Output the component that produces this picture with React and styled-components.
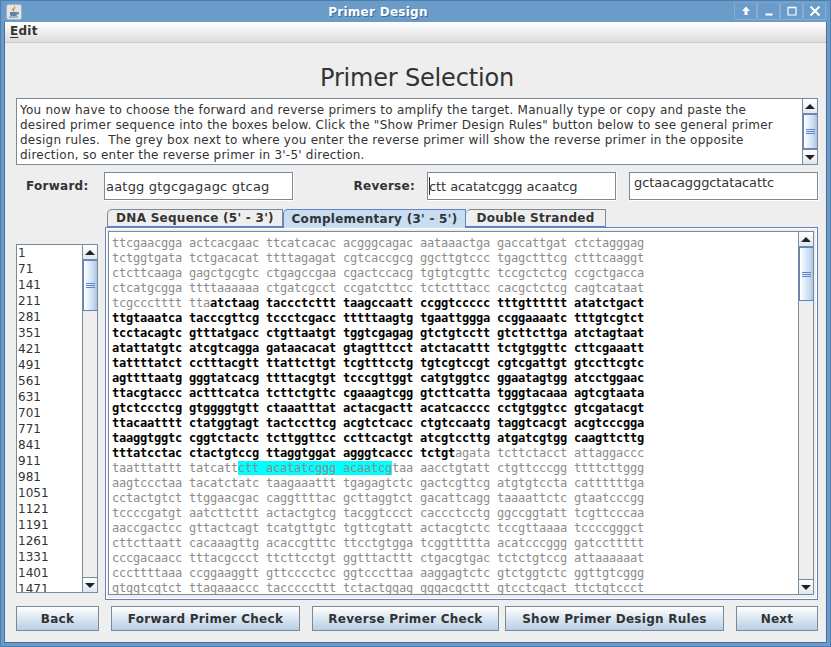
import React from 'react';
import styled, { createGlobalStyle } from 'styled-components';

const sans = '"DejaVu Sans", sans-serif';
const mono = '"DejaVu Sans Mono", monospace';
const steel = '#7a8a99';
const ocean = '#6382bf';

const GlobalStyle = createGlobalStyle`
  html, body {
    margin: 0;
    padding: 0;
    background: #eeeeee;
  }
`;

const Frame = styled.div`
  box-sizing: border-box;
  width: 831px;
  height: 647px;
  display: flex;
  flex-direction: column;
  background: #6a9bc9;
  border: 1px solid #4f7fae;
  font-family: ${sans};
  color: #333333;
  overflow: hidden;
`;

const TitleBar = styled.div`
  height: 21px;
  flex: none;
  display: flex;
  align-items: center;
  padding: 0 4px 0 5px;
`;

const AppIcon = styled.svg`
  width: 16px;
  height: 16px;
  display: block;
  flex: none;
`;

const TitleText = styled.div`
  flex: 1;
  text-align: center;
  font-size: 12px;
  font-weight: 700;
  letter-spacing: 0.27px;
  color: #ffffff;
  text-shadow: 1px 1px 0 #3f6a94;
`;

const WindowButtons = styled.div`
  flex: none;
  display: flex;
`;

const WindowButton = styled.div`
  box-sizing: border-box;
  width: 23px;
  height: 18px;
  margin-top: -2px;
  display: flex;
  align-items: center;
  justify-content: center;
  border: 1px solid #86aed4;
  border-top-color: #7aa5ce;
  border-radius: 2px;
  background: #6a9bc9;

  svg {
    display: block;
  }
`;

const Client = styled.div`
  flex: 1;
  margin: 0 3px 3px 3px;
  display: flex;
  flex-direction: column;
  background: #eeeeee;
  border: solid #45709b;
  border-width: 0 1px 1px 1px;
  min-height: 0;
`;

const MenuBar = styled.div`
  height: 21px;
  flex: none;
  box-sizing: border-box;
  display: flex;
  align-items: center;
  padding: 0 0 2px 5px;
  background: linear-gradient(#ffffff, #dcdcdc);
  border-bottom: 1px solid #cccccc;
  font-size: 12px;
  font-weight: 700;
  letter-spacing: 0.27px;

  u {
    text-underline-offset: 2px;
  }
`;

const Body = styled.div`
  flex: 1;
  display: flex;
  flex-direction: column;
  padding: 0 8px 0 11px;
`;

const Heading = styled.h1`
  margin: 0;
  height: 55px;
  padding-top: 21px;
  box-sizing: border-box;
  text-align: center;
  font-size: 24px;
  line-height: 29px;
  letter-spacing: -0.18px;
  font-weight: 400;
  color: #333333;
`;

const ScrollBox = styled.div`
  box-sizing: border-box;
  display: flex;
  background: #ffffff;
  border: 1px solid ${steel};
  overflow: hidden;
`;

const Intro = styled(ScrollBox)`
  height: 67px;
`;

const IntroText = styled.div`
  flex: 1;
  padding: 4px 3px 0 3px;
  font-size: 12px;
  line-height: 15px;
  letter-spacing: 0.24px;
  white-space: pre;
  overflow: hidden;
`;

const Track = styled.div`
  flex: none;
  width: 15px;
  box-sizing: border-box;
  display: flex;
  flex-direction: column;
  background: #eeeeee;
  border-left: 1px solid ${steel};
`;

const Arrow = styled.div`
  flex: none;
  height: 15px;
  box-sizing: border-box;
  display: flex;
  align-items: center;
  justify-content: center;
  background: linear-gradient(#ffffff, #dde8f3);
  border-bottom: ${p => (p.$down ? 'none' : `1px solid ${steel}`)};
  border-top: ${p => (p.$down ? `1px solid ${steel}` : 'none')};

  &::after {
    content: '';
    width: 0;
    height: 0;
    border-left: 5px solid transparent;
    border-right: 5px solid transparent;
    ${p => (p.$down ? 'border-top: 5px solid #222222;' : 'border-bottom: 5px solid #222222;')}
  }
`;

const Thumb = styled.div`
  flex: none;
  height: ${p => p.$size}px;
  box-sizing: border-box;
  display: flex;
  flex-direction: column;
  align-items: center;
  justify-content: center;
  gap: 1px;
  background: linear-gradient(90deg, #ffffff, #c8ddf2 70%, #a9c3e0);
  border: 1px solid ${ocean};
  border-width: 1px 0 1px 1px;

  i {
    display: block;
    width: 9px;
    height: 1px;
    background: ${ocean};
  }
`;

const Gutter = styled.div`
  flex: 1;
`;

const Scrollbar = ({ size }) => (
  <Track>
    <Arrow />
    <Thumb $size={size}>
      <i />
      <i />
      <i />
    </Thumb>
    <Gutter />
    <Arrow $down />
  </Track>
);

const PrimerRow = styled.div`
  height: 28px;
  margin-top: 7px;
  display: grid;
  grid-template-columns: 88px 189px 134px 189px 189px;
  align-items: center;
`;

const FieldLabel = styled.div`
  font-size: 12px;
  font-weight: 700;
  letter-spacing: 0.27px;
  text-align: ${p => (p.$right ? 'right' : 'left')};
  padding-left: ${p => (p.$right ? '0' : '10px')};
  padding-right: ${p => (p.$right ? '12px' : '0')};
`;

const Field = styled.div`
  box-sizing: border-box;
  height: 28px;
  margin-left: ${p => (p.$gap ? '13px' : '0')};
  width: 189px;
  padding: ${p => (p.$raised ? '2px 1px 0 4px' : '0 1px')};
  display: flex;
  align-items: ${p => (p.$raised ? 'flex-start' : 'center')};
  background: #ffffff;
  border: 1px solid ${steel};
  box-shadow: 1px 1px 0 #ffffff;
  font-size: 13px;
  letter-spacing: ${p => p.$track}px;
  white-space: pre;
`;

const Caret = styled.span`
  display: inline-block;
  width: 1px;
  height: 18px;
  margin-right: -1px;
  background: #333333;
`;

const Workspace = styled.div`
  margin-top: 9px;
  display: grid;
  grid-template-columns: 82px 1fr;
  column-gap: 7px;
  height: 391px;
`;

const NumberBox = styled(ScrollBox)`
  margin-top: 35px;
  height: 349px;
`;

const NumberList = styled.div`
  flex: 1;
  padding-left: 1px;
  font-size: 12px;
  line-height: 16px;
  overflow: hidden;
`;

const TabPane = styled.div`
  display: flex;
  flex-direction: column;
  min-width: 0;
`;

const TabStrip = styled.div`
  height: 18px;
  flex: none;
  display: flex;
  padding-left: 2px;
  position: relative;
  z-index: 1;
`;

const Tab = styled.div`
  box-sizing: border-box;
  width: ${p => p.$width}px;
  height: ${p => (p.$active ? 19 : 18)}px;
  display: flex;
  align-items: center;
  justify-content: center;
  font-size: 12px;
  font-weight: 700;
  letter-spacing: 0.27px;
  color: #333333;
  background: ${p => (p.$active ? '#c8ddf2' : '#eeeeee')};
  border: 1px solid ${p => (p.$active ? ocean : steel)};
  border-bottom: ${p => (p.$active ? 'none' : `1px solid ${ocean}`)};
  border-left-width: ${p => (p.$first || p.$active ? 1 : 0)}px;
  border-top-left-radius: 5px;
`;

const TabPanel = styled.div`
  box-sizing: border-box;
  height: 373px;
  padding: 3px 3px 4px 2px;
  border: 1px solid ${ocean};
  box-shadow: inset 0 0 0 1px #ffffff;
  display: flex;
`;

const SequenceBox = styled(ScrollBox)`
  flex: 1;
  min-width: 0;
`;

const Sequence = styled.pre`
  flex: 1;
  margin: 0;
  padding: 4px 0 0 3px;
  font-family: ${mono};
  font-size: 12px;
  line-height: 15px;
  letter-spacing: -0.224px;
  color: #8c8c8c;
  overflow: hidden;
`;

const Strong = styled.b`
  color: #000000;
  font-weight: 700;
`;

const Hit = styled.span`
  background: #00ffff;
`;

const ButtonRow = styled.div`
  margin-top: 6px;
  display: flex;
`;

const ActionButton = styled.button`
  box-sizing: border-box;
  width: ${p => p.$width}px;
  height: 25px;
  margin: 0 ${p => p.$after ?? 0}px 0 0;
  padding: 0;
  font-family: ${sans};
  font-size: 12px;
  font-weight: 700;
  letter-spacing: 0.27px;
  color: #333333;
  background: linear-gradient(#ffffff, #dde8f3 45%, #b8cfe5);
  border: 1px solid ${steel};
  border-radius: 0;
`;

const introLines = [
  'You now have to choose the forward and reverse primers to amplify the target. Manually type or copy and paste the',
  'desired primer sequence into the boxes below. Click the "Show Primer Design Rules" button below to see general primer',
  'design rules.  The grey box next to where you enter the reverse primer will show the reverse primer in the opposite',
  "direction, so enter the reverse primer in 3'-5' direction."
];

const rowNumbers = Array.from({ length: 22 }, (_, i) => i * 70 + 1);

const leadIn = `ttcgaacgga actcacgaac ttcatcacac acgggcagac aataaactga gaccattgat ctctagggag
tctggtgata tctgacacat ttttagagat cgtcaccgcg ggcttgtccc tgagctttcg ctttcaaggt
ctcttcaaga gagctgcgtc ctgagccgaa cgactccacg tgtgtcgttc tccgctctcg ccgctgacca
ctcatgcgga ttttaaaaaa ctgatcgcct ccgatcttcc tctctttacc cacgctctcg cagtcataat
tcgccctttt tta`;

const target = `atctaag taccctcttt taagccaatt ccggtccccc tttgtttttt atatctgact
ttgtaaatca tacccgttcg tccctcgacc tttttaagtg tgaattggga ccggaaaatc tttgtcgtct
tcctacagtc gtttatgacc ctgttaatgt tggtcgagag gtctgtcctt gtcttcttga atctagtaat
atattatgtc atcgtcagga gataacacat gtagtttcct atctacattt tctgtggttc cttcgaaatt
tattttatct cctttacgtt ttattcttgt tcgtttcctg tgtcgtccgt cgtcgattgt gtccttcgtc
agttttaatg gggtatcacg ttttacgtgt tcccgttggt catgtggtcc ggaatagtgg atcctggaac
ttacgtaccc actttcatca tcttctgttc cgaaagtcgg gtcttcatta tgggtacaaa agtcgtaata
gtctccctcg gtggggtgtt ctaaatttat actacgactt acatcacccc cctgtggtcc gtcgatacgt
ttacaatttt ctatggtagt tactccttcg acgtctcacc ctgtccaatg taggtcacgt acgtcccgga
taaggtggtc cggtctactc tcttggttcc ccttcactgt atcgtccttg atgatcgtgg caagttcttg
tttatcctac ctactgtccg ttaggtggat agggtcaccc tctgt`;

const between = `agata tcttctacct attaggaccc
taatttattt tatcatt`;

const primer = 'ctt acatatcggg acaatcg';

const tail = `taa aacctgtatt ctgttcccgg ttttcttggg
aagtccctaa tacatctatc taagaaattt tgagagtctc gactcgttcg atgtgtccta cattttttga
cctactgtct ttggaacgac caggttttac gcttaggtct gacattcagg taaaattctc gtaatcccgg
tccccgatgt aatcttcttt actactgtcg tacggtccct caccctcctg ggccggtatt tcgttcccaa
aaccgactcc gttactcagt tcatgttgtc tgttcgtatt actacgtctc tccgttaaaa tccccgggct
cttcttaatt cacaaagttg acaccgtttc ttcctgtgga tcggttttta acatcccggg gatccttttt
cccgacaacc tttacgccct ttcttcctgt ggtttacttt ctgacgtgac tctctgtccg attaaaaaat
cccttttaaa ccggaaggtt gttcccctcc ggtcccttaa aaggagtctc gtctggtctc ggttgtcggg
gtggtcgtct ttagaaaccc tacccccttt tctactggag gggacgcttt gtcctcgact ttctgtccct`;

const JavaIcon = () => (
  <AppIcon viewBox="0 0 16 16">
    <rect x="0.5" y="0.5" width="15" height="15" rx="2" fill="#e4e4e0" stroke="#9fb4c8" />
    <path d="M8.5 2.5c1.5 1.5-2 2.5-.6 4M6.8 4.5c-.8 1 1 1.5.2 2.5" fill="none" stroke="#d9772b" strokeWidth="1.1" />
    <path d="M4 8h7v2.5c0 1-1 1.5-2 1.5H6c-1 0-2-.5-2-1.5z" fill="#5d84a8" />
    <path d="M11 8.5h1.5v1.5H11" fill="none" stroke="#5d84a8" />
    <path d="M3 13h9" stroke="#5d84a8" strokeWidth="1" />
  </AppIcon>
);

const App = () => (
  <>
    <GlobalStyle />
    <Frame>
      <TitleBar>
        <JavaIcon />
        <TitleText>Primer Design</TitleText>
        <WindowButtons>
          <WindowButton>
            <svg width="12" height="12" viewBox="0 0 12 12">
              <path d="M6 1.5 2 6h2.5v4h3V6H10z" fill="#ffffff" />
            </svg>
          </WindowButton>
          <WindowButton>
            <svg width="12" height="12" viewBox="0 0 12 12">
              <path d="M2.5 8.5h7v2h-7z" fill="#ffffff" />
            </svg>
          </WindowButton>
          <WindowButton>
            <svg width="12" height="12" viewBox="0 0 12 12">
              <path d="M2 2.5h8v7.5H2z" fill="none" stroke="#ffffff" strokeWidth="1.2" />
              <path d="M2 2.5h8" fill="none" stroke="#ffffff" strokeWidth="1.6" />
            </svg>
          </WindowButton>
          <WindowButton>
            <svg width="12" height="12" viewBox="0 0 12 12">
              <path d="M1.5 1.5l9 9M10.5 1.5l-9 9" fill="none" stroke="#ffffff" strokeWidth="2" />
            </svg>
          </WindowButton>
        </WindowButtons>
      </TitleBar>
      <Client>
        <MenuBar>
          <span>
            <u>E</u>dit
          </span>
        </MenuBar>
        <Body>
          <Heading>Primer Selection</Heading>
          <Intro>
            <IntroText>{introLines.join('\n')}</IntroText>
            <Scrollbar size={35} />
          </Intro>
          <PrimerRow>
            <FieldLabel>Forward:</FieldLabel>
            <Field $track={0.2}>aatgg gtgcgagagc gtcag</Field>
            <FieldLabel $right>Reverse:</FieldLabel>
            <Field $track={-0.08}>
              <Caret />
              ctt acatatcggg acaatcg
            </Field>
            <Field $gap $raised $track={-0.1}>
              gctaacagggctatacattc
            </Field>
          </PrimerRow>
          <Workspace>
            <NumberBox>
              <NumberList>
                {rowNumbers.map(n => (
                  <div key={n}>{n}</div>
                ))}
              </NumberList>
              <Scrollbar size={51} />
            </NumberBox>
            <TabPane>
              <TabStrip>
                <Tab $first $width={176}>
                  DNA Sequence (5' - 3')
                </Tab>
                <Tab $active $width={183}>
                  Complementary (3' - 5')
                </Tab>
                <Tab $width={140}>Double Stranded</Tab>
              </TabStrip>
              <TabPanel>
                <SequenceBox>
                  <Sequence>
                    {leadIn}
                    <Strong>{target}</Strong>
                    {between}
                    <Hit>{primer}</Hit>
                    {tail}
                  </Sequence>
                  <Scrollbar size={54} />
                </SequenceBox>
              </TabPanel>
            </TabPane>
          </Workspace>
          <ButtonRow>
            <ActionButton $width={83} $after={12}>Back</ActionButton>
            <ActionButton $width={189} $after={12}>Forward Primer Check</ActionButton>
            <ActionButton $width={187} $after={6}>Reverse Primer Check</ActionButton>
            <ActionButton $width={219} $after={12}>Show Primer Design Rules</ActionButton>
            <ActionButton $width={82}>Next</ActionButton>
          </ButtonRow>
        </Body>
      </Client>
    </Frame>
  </>
);

export default App;
